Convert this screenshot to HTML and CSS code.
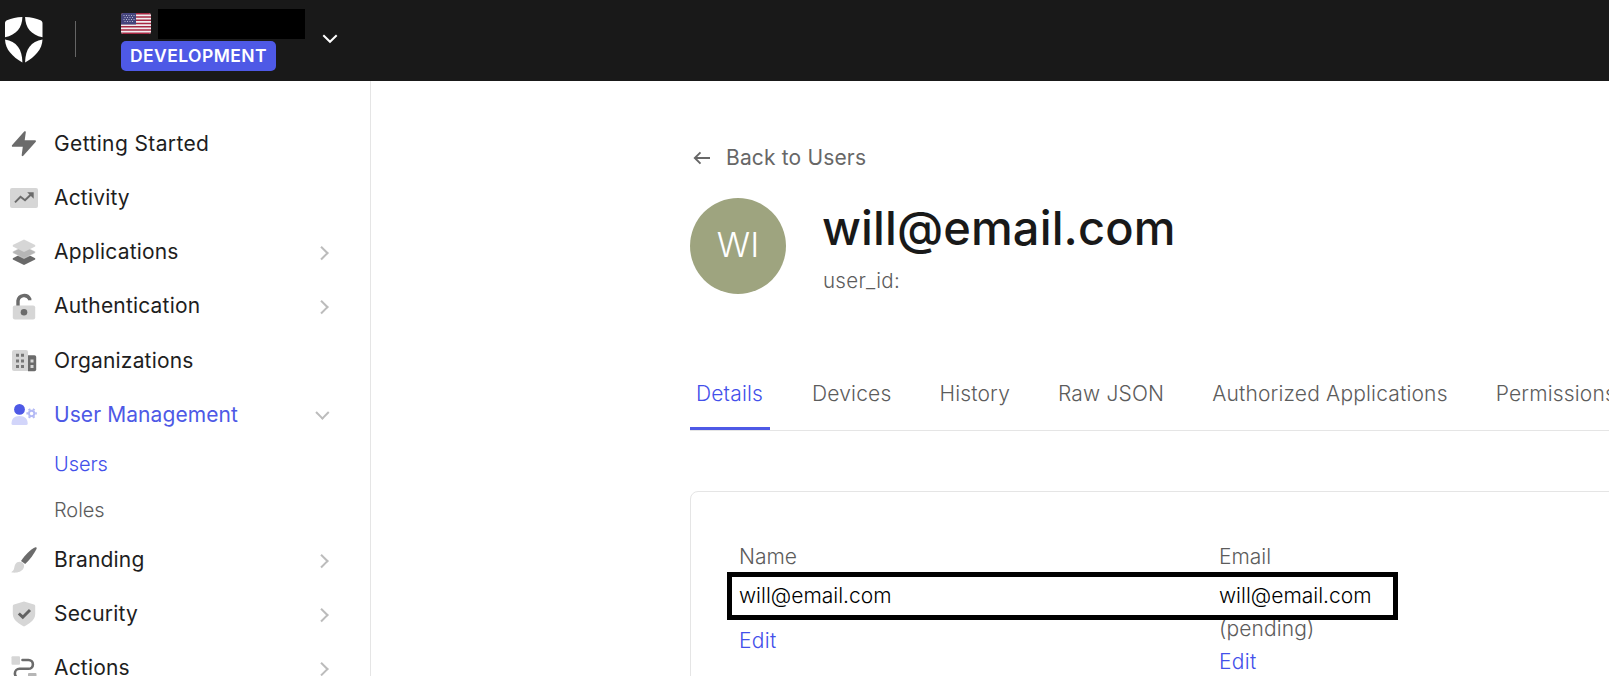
FILE: index.html
```html
<!DOCTYPE html>
<html lang="en">
<head>
<meta charset="utf-8">
<title>User Details</title>
<link rel="stylesheet" href="styles.css">
</head>
<body>
<header class="topbar">
  <svg class="logo" width="38" height="46" viewBox="0 0 38 46" fill="#fff">
    <path d="M17.4 0C17.2 10.5 11.5 18 0 20.2V6.2C0 4.8.7 3.7 2 3.2 6.5 1.300 11.500.2 17.400 0Z"/>
    <path d="M20.100 0C20.300 10.500 26 18 37.500 20.200V6.200C37.500 4.800 36.800 3.700 35.500 3.200 31 1.300 26 .2 20.100 0Z"/>
    <path d="M0 22.600C11.500 24.700 17.200 32 17.400 45.500 7.500 40 .3 32.500 0 22.600Z"/>
    <path d="M37.500 22.600C26 24.700 20.300 32 20.100 45.500 30 40 37.200 32.500 37.500 22.600Z"/>
  </svg>
  <span class="divider"></span>
  <div class="tenant">
    <div class="tenant-row">
      <svg class="flag" width="30" height="21" viewBox="0 0 30 21">
        <clipPath id="fc"><rect width="30" height="21" rx="2.500"/></clipPath>
        <g clip-path="url(#fc)">
          <rect width="30" height="21" fill="#f1eef0"/>
          <path d="M0 .8H30M0 4H30M0 7.250H30M0 10.500H30M0 13.700H30M0 16.950H30M0 20.200H30" stroke="#a62842" stroke-width="1.620"/>
          <rect width="15" height="11.500" fill="#45457c"/>
          <path d="M2.500 2.500H14M3.500 4.500H13M2.500 6.500H14M3.500 8.500H13" stroke="#b9b8d0" stroke-width="1" stroke-dasharray="1 1.500"/>
        </g>
      </svg>
      <span class="redacted"></span>
    </div>
    <span class="env">DEVELOPMENT</span>
  </div>
  <svg class="caret" width="16" height="10" viewBox="0 0 16 10" fill="none" stroke="#fff" stroke-width="2"><path d="M1.300 1.300 8 7.800 14.700 1.300"/></svg>
</header>
<div class="shell">
  <nav class="sidebar">
    <a class="item wide"><svg class="icon" viewBox="0 0 28 28"><path d="M14.200 1.500C15 .8 16 1.300 15.800 2.300L14.700 10.300H25C26 10.300 26.300 11.300 25.600 12L13.300 25.800C12.500 26.500 11.500 26 11.700 25L12.800 16.800H2.800C1.800 16.800 1.500 15.800 2.200 15Z" fill="#6b6b6b"/></svg><span>Getting Started</span></a>
    <a class="item"><svg class="icon" viewBox="0 0 28 28"><rect y="4" width="28" height="20" rx="2" fill="#d6d6d6"/><path d="M5 18.400 10.500 12.800 15 16.300 21.500 10" fill="none" stroke="#6b6b6b" stroke-width="2"/><path d="M17.200 8.200H23.700V14.700Z" fill="#6b6b6b"/></svg><span>Activity</span></a>
    <a class="item"><svg class="icon" viewBox="0 0 28 28"><path d="M14 14.500 25.200 20.300V21.600L14 27 2.800 21.600V20.300Z" fill="#696969"/><path d="M14 8 25.200 13.500V15L14 20.500 2.800 15V13.500Z" fill="#b6b6b6" stroke="#fff" stroke-width=".4"/><path d="M14 1.500 25.200 7V8.400L14 14 2.800 8.400V7Z" fill="#d6d6d6"/></svg><span>Applications</span><i class="chev"></i></a>
    <a class="item"><svg class="icon" viewBox="0 0 28 28"><path d="M8 13.500V7.800A6.200 6.200 0 0 1 19.700 6V7.200" fill="none" stroke="#6b6b6b" stroke-width="3.400"/><rect x="2.800" y="12.600" width="22.400" height="14" rx="2" fill="#d6d6d6"/><circle cx="14" cy="19.300" r="3.300" fill="#6b6b6b"/></svg><span>Authentication</span><i class="chev"></i></a>
    <a class="item low"><svg class="icon" viewBox="0 0 28 28"><path d="M4 3H16a2 2 0 0 1 2 2V24H4a2 2 0 0 1-2-2V5a2 2 0 0 1 2-2Z" fill="#d6d6d6"/><path d="M18 8.300H24.500a1.700 1.700 0 0 1 1.700 1.700V22.500a1.700 1.700 0 0 1-1.700 1.700H18Z" fill="#6b6b6b"/><path d="M6 6.800h3v3H6zM11 6.800h3v3h-3zM6 12.500h3v3H6zM11 12.500h3v3h-3zM6 18h3v3H6zM11 18h3v3h-3z" fill="#777"/><path d="M20.500 12.500h3v3h-3zM20.500 18h3v3h-3z" fill="#d6d6d6"/></svg><span>Organizations</span></a>
    <a class="item active"><svg class="icon" viewBox="0 0 28 28"><circle cx="9.500" cy="8.400" r="5.400" fill="#4e59e6"/><path d="M1.500 22.500C1.500 18 4 15 9.500 15S17.700 18 17.700 22.500A1.500 1.500 0 0 1 16.200 24H3A1.500 1.500 0 0 1 1.500 22.500Z" fill="#d2d5fa"/><g fill="none" stroke="#b3b9f5"><circle cx="21.600" cy="12.400" r="2.700" stroke-width="1.900"/><path d="M25.200 12.400h1.600M18 12.400h-1.600M23.400 15.500l.8 1.400M19.800 9.300l-.8-1.400M19.800 15.500l-.8 1.400M23.400 9.300l.8-1.400" stroke-width="2.300"/></g></svg><span>User Management</span><i class="chev down"></i></a>
    <div class="subnav"><a class="sub current">Users</a><a class="sub">Roles</a></div>
    <a class="item"><svg class="icon" viewBox="0 0 28 28"><path d="M11 15C15 9 21 3 25.500 1.300 26.700 1.100 27 2 26.500 3 24 8 20 13.500 15.200 18Z" fill="#6b6b6b"/><path d="M9.500 15.800C13 15.800 15.300 19 13.500 22.300 11.500 26.500 6 27 2 26.500 1.300 26.300 1.500 25.700 2 25.400 5 23.800 3.800 20.500 5.500 18 6.500 16.500 7.800 15.800 9.500 15.800Z" fill="#d6d6d6"/></svg><span>Branding</span><i class="chev"></i></a>
    <a class="item"><svg class="icon" viewBox="0 0 28 28"><path d="M14 1.500 24 4.400Q25.200 4.800 25.200 6V14C25.200 20 19 24 14 26.500 9 24 2.800 20 2.800 14V6Q2.800 4.800 4 4.400Z" fill="#d6d6d6"/><path d="M8.800 13.500 12.800 17.200 20 10" fill="none" stroke="#636363" stroke-width="3"/></svg><span>Security</span><i class="chev"></i></a>
    <a class="item"><svg class="icon" viewBox="0 0 28 28"><rect x="1.500" y="1.300" width="8.500" height="8.500" rx="1" fill="#d6d6d6"/><rect x="18" y="18" width="8.500" height="8.500" rx="1" fill="#b6b6b6"/><path d="M12.500 5H18.500A4.400 4.400 0 0 1 18.500 13.800H9.500A4.600 4.600 0 0 0 9.500 23H16" fill="none" stroke="#6b6b6b" stroke-width="2.600" stroke-linecap="round"/></svg><span>Actions</span><i class="chev"></i></a>
  </nav>
  <main class="main">
    <a class="back"><svg width="18" height="14" viewBox="0 0 18 14" fill="none" stroke="#676767" stroke-width="1.900"><path d="M17 7H2M7.500 1.300 1.800 7 7.500 12.700"/></svg><span>Back to Users</span></a>
    <div class="profile">
      <div class="avatar">WI</div>
      <div><h1 class="title">will@email.com</h1><div class="uid">user_id:</div></div>
    </div>
    <div class="tabs">
      <a class="tab selected">Details</a><a class="tab">Devices</a><a class="tab">History</a><a class="tab">Raw JSON</a><a class="tab">Authorized Applications</a><a class="tab">Permissions</a>
    </div>
    <section class="card">
      <div class="field"><div class="label">Name</div><div class="value">will@email.com</div><a class="edit">Edit</a></div>
      <div class="field tight"><div class="label">Email</div><div class="value">will@email.com</div><div class="note">(pending)</div><a class="edit">Edit</a></div>
      <div class="highlight"></div>
    </section>
  </main>
</div>
</body>
</html>
```
FILE: styles.css
```css
* { box-sizing: border-box; }
body { margin: 0; height: 676px; overflow: hidden; background: #fff; color: #1e1e1e; font-family: Inter, "Liberation Sans", sans-serif; font-size: 21px; }
.topbar { display: flex; height: 81px; background: #191919; }
.logo { margin: 17px 0 0 5px; flex: none; }
.divider { width: 1px; height: 36px; margin: 21px 0 0 32px; background: #656565; }
.tenant { margin: 9px 0 0 45px; width: 184px; }
.tenant-row { display: flex; height: 30px; }
.flag { margin-top: 4px; }
.redacted { width: 147px; height: 30px; margin-left: 7px; background: #000; }
.env { display: block; width: 155px; height: 30px; margin-top: 2px; border-radius: 5px; background: #4e59e6; color: #fff; font-size: 17.500px; font-weight: 600; line-height: 30px; text-align: center; letter-spacing: .45px; }
.caret { margin: 34px 0 0 17px; }
.shell { display: flex; height: 595px; }
.sidebar { flex: none; width: 371px; padding-top: 36px; border-right: 1px solid #e5e5e5; }
.item { display: flex; align-items: center; height: 54.200px; padding: 0 43px 0 10px; line-height: 18px; letter-spacing: .18px; }
.item span { padding-bottom: 1.400px; }
.wide { letter-spacing: .38px; }
.wide span, .low span, .active span { padding-bottom: 0; }
.icon { width: 28px; height: 28px; margin-right: 16px; flex: none; }
.active { color: #4e59e6; letter-spacing: .08px; }
.chev { width: 9.500px; height: 9.500px; margin: 1px 1px 0 auto; border: solid #bcbcbc; border-width: 2px 2px 0 0; transform: rotate(45deg); }
.down { margin: -4px 0 0 auto; transform: rotate(135deg); }
.subnav { display: flex; flex-direction: column; padding: 0 0 0 54px; height: 91px; }
.sub { height: 46px; line-height: 44px; font-size: 20px; font-weight: 300; letter-spacing: -.05px; color: #5c5c5c; }
.current { color: #4350ea; }
.main { flex: 1; min-width: 0; padding: 61px 0 0 319px; overflow: hidden; color: #5c5c5c; }
.back { display: flex; align-items: center; height: 32px; font-size: 21px; letter-spacing: .16px; color: #676767; }
.back span { padding-bottom: 1px; }
.back svg { margin: 0 15px 0 3px; }
.profile { display: flex; gap: 36px; margin-top: 24px; height: 96px; }
.avatar { flex: none; width: 96px; height: 96px; border-radius: 50%; background: #9ea47f; color: #fff; font-size: 34.500px; font-weight: 300; line-height: 94px; text-align: center; }
.title { margin: 3px 0 0; color: #191919; font-size: 47px; font-weight: 500; line-height: 54px; letter-spacing: .12px; white-space: nowrap; }
.uid { margin-top: 10px; padding-left: 1px; font-size: 20.500px; font-weight: 300; line-height: 32px; letter-spacing: .3px; }
.tabs { display: flex; gap: 36px; width: 1000px; height: 69px; margin-top: 68px; border-bottom: 1px solid #e5e5e5; }
.tab { height: 68px; padding: 0 6px; line-height: 64px; font-size: 21px; font-weight: 300; letter-spacing: .17px; white-space: nowrap; }
.selected { padding-right: 7px; color: #4350ea; border-bottom: 3px solid #4e59e6; }
.card { position: relative; display: flex; width: 1000px; height: 300px; margin-top: 60px; padding: 48px; border: 1px solid #e5e5e5; border-radius: 8px; font-weight: 300; }
.field { flex: none; width: 480px; line-height: 33px; }
.value { margin-top: 6px; color: #000; }
.note { letter-spacing: .12px; }
.edit { display: block; margin-top: 12px; color: #4350ea; letter-spacing: .35px; }
.tight .edit { margin-top: 0; }
.highlight { position: absolute; left: 36px; top: 80px; width: 671px; height: 48px; border: 5px solid #000; }
```
